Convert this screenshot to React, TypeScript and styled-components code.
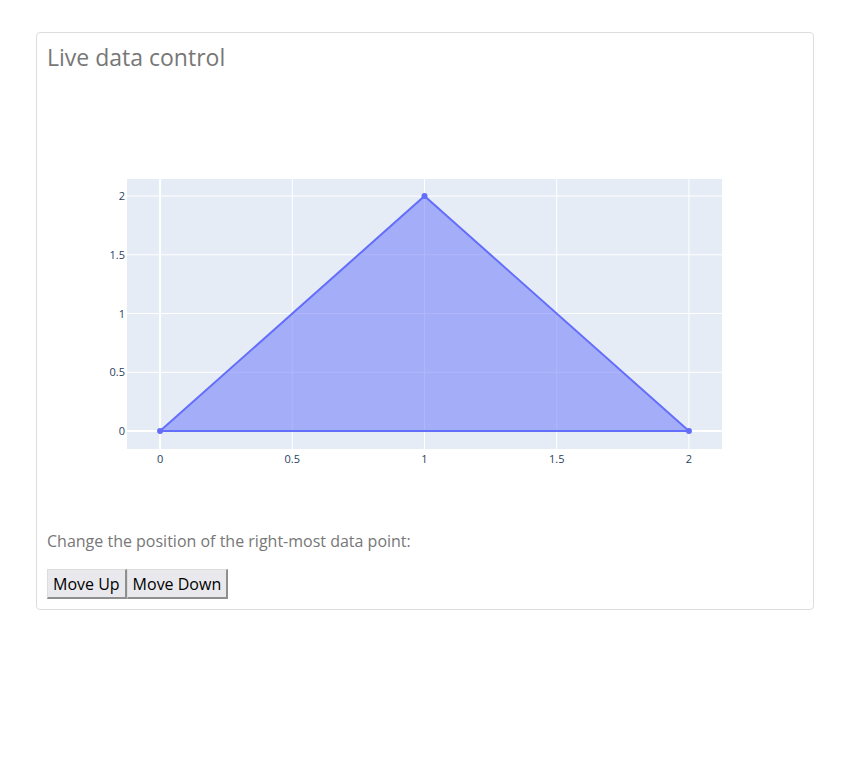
import { useState } from 'react';
import styled, { createGlobalStyle } from 'styled-components';

const GlobalStyle = createGlobalStyle`
  body {
    margin: 0;
    background: #ffffff;
    font-family: 'Open Sans', 'Noto Sans', sans-serif;
  }
`;

const FIG_W = 755;
const FIG_H = 450;
const M = { l: 80, r: 80, t: 100, b: 80 };
const X_RANGE: [number, number] = [-0.125, 2.125];
const Y_RANGE: [number, number] = [-0.153, 2.145];

const plotW = FIG_W - M.l - M.r;
const plotH = FIG_H - M.t - M.b;
const sx = (v: number) => M.l + ((v - X_RANGE[0]) / (X_RANGE[1] - X_RANGE[0])) * plotW;
const sy = (v: number) => M.t + plotH - ((v - Y_RANGE[0]) / (Y_RANGE[1] - Y_RANGE[0])) * plotH;

const TICKS = [0, 0.5, 1, 1.5, 2];

const Chart = ({ lastY }: { lastY: number }) => {
  const pts: [number, number][] = [
    [0, 0],
    [1, 2],
    [2, lastY],
  ];
  const path = pts.map(([x, y], i) => `${i ? 'L' : 'M'}${sx(x)},${sy(y)}`).join(' ') + ' Z';

  return (
    <Figure width={FIG_W} height={FIG_H} viewBox={`0 0 ${FIG_W} ${FIG_H}`}>
      <rect x={M.l} y={M.t} width={plotW} height={plotH} fill="#e5ecf6" />
      {TICKS.map((t) => (
        <g key={`g${t}`}>
          <line x1={sx(t)} x2={sx(t)} y1={M.t} y2={M.t + plotH} stroke="#fff" strokeWidth={t === 0 ? 2 : 1} />
          <line x1={M.l} x2={M.l + plotW} y1={sy(t)} y2={sy(t)} stroke="#fff" strokeWidth={t === 0 ? 2 : 1} />
        </g>
      ))}
      <path d={path} fill="rgba(99,110,250,0.5)" stroke="#636efa" strokeWidth={2} strokeLinejoin="round" />
      {pts.map(([x, y]) => (
        <circle key={`p${x}`} cx={sx(x)} cy={sy(y)} r={3} fill="#636efa" />
      ))}
      {TICKS.map((t) => (
        <TickText key={`x${t}`} x={sx(t)} y={M.t + plotH + 14} textAnchor="middle">
          {t}
        </TickText>
      ))}
      {TICKS.map((t) => (
        <TickText key={`y${t}`} x={M.l - 2} y={sy(t) + 4} textAnchor="end">
          {t}
        </TickText>
      ))}
    </Figure>
  );
};

const App = () => {
  const [lastY, setLastY] = useState(0);

  return (
    <>
      <GlobalStyle />
      <Card>
        <Title>Live data control</Title>
        <Chart lastY={lastY} />
        <Hint>Change the position of the right-most data point:</Hint>
        <ButtonRow>
          <Button onClick={() => setLastY((v) => v + 0.5)}>Move Up</Button>
          <Button onClick={() => setLastY((v) => v - 0.5)}>Move Down</Button>
        </ButtonRow>
      </Card>
    </>
  );
};

export default App;

const Card = styled.div`
  margin: 32px 36px 0 36px;
  padding: 10px 10px 10px 10px;
  border: 1px solid #dddddd;
  border-radius: 4px;
`;
const Title = styled.h2`
  margin: 0 0 8px 0;
  font-size: 23px;
  font-weight: 400;
  line-height: 28px;
  color: #777777;
`;
const Figure = styled.svg`
  display: block;
`;
const TickText = styled.text`
  font-family: 'Open Sans', 'Noto Sans', sans-serif;
  font-size: 11px;
  fill: #2a3f5f;
`;
const Hint = styled.p`
  margin: 0 0 16px 0;
  font-size: 16px;
  line-height: 24px;
  color: #777777;
`;
const ButtonRow = styled.div`
  display: flex;
`;
const Button = styled.button`
  height: 30px;
  padding: 0 5px;
  font-family: 'Open Sans', 'Noto Sans', sans-serif;
  font-size: 16px;
  color: #000;
  background: #e9e9ed;
  border-style: solid;
  border-width: 1px 2px 2px 1px;
  border-color: #dcdcdc #8f8f8f #8f8f8f #dcdcdc;
  border-radius: 0;
  cursor: pointer;
`;
